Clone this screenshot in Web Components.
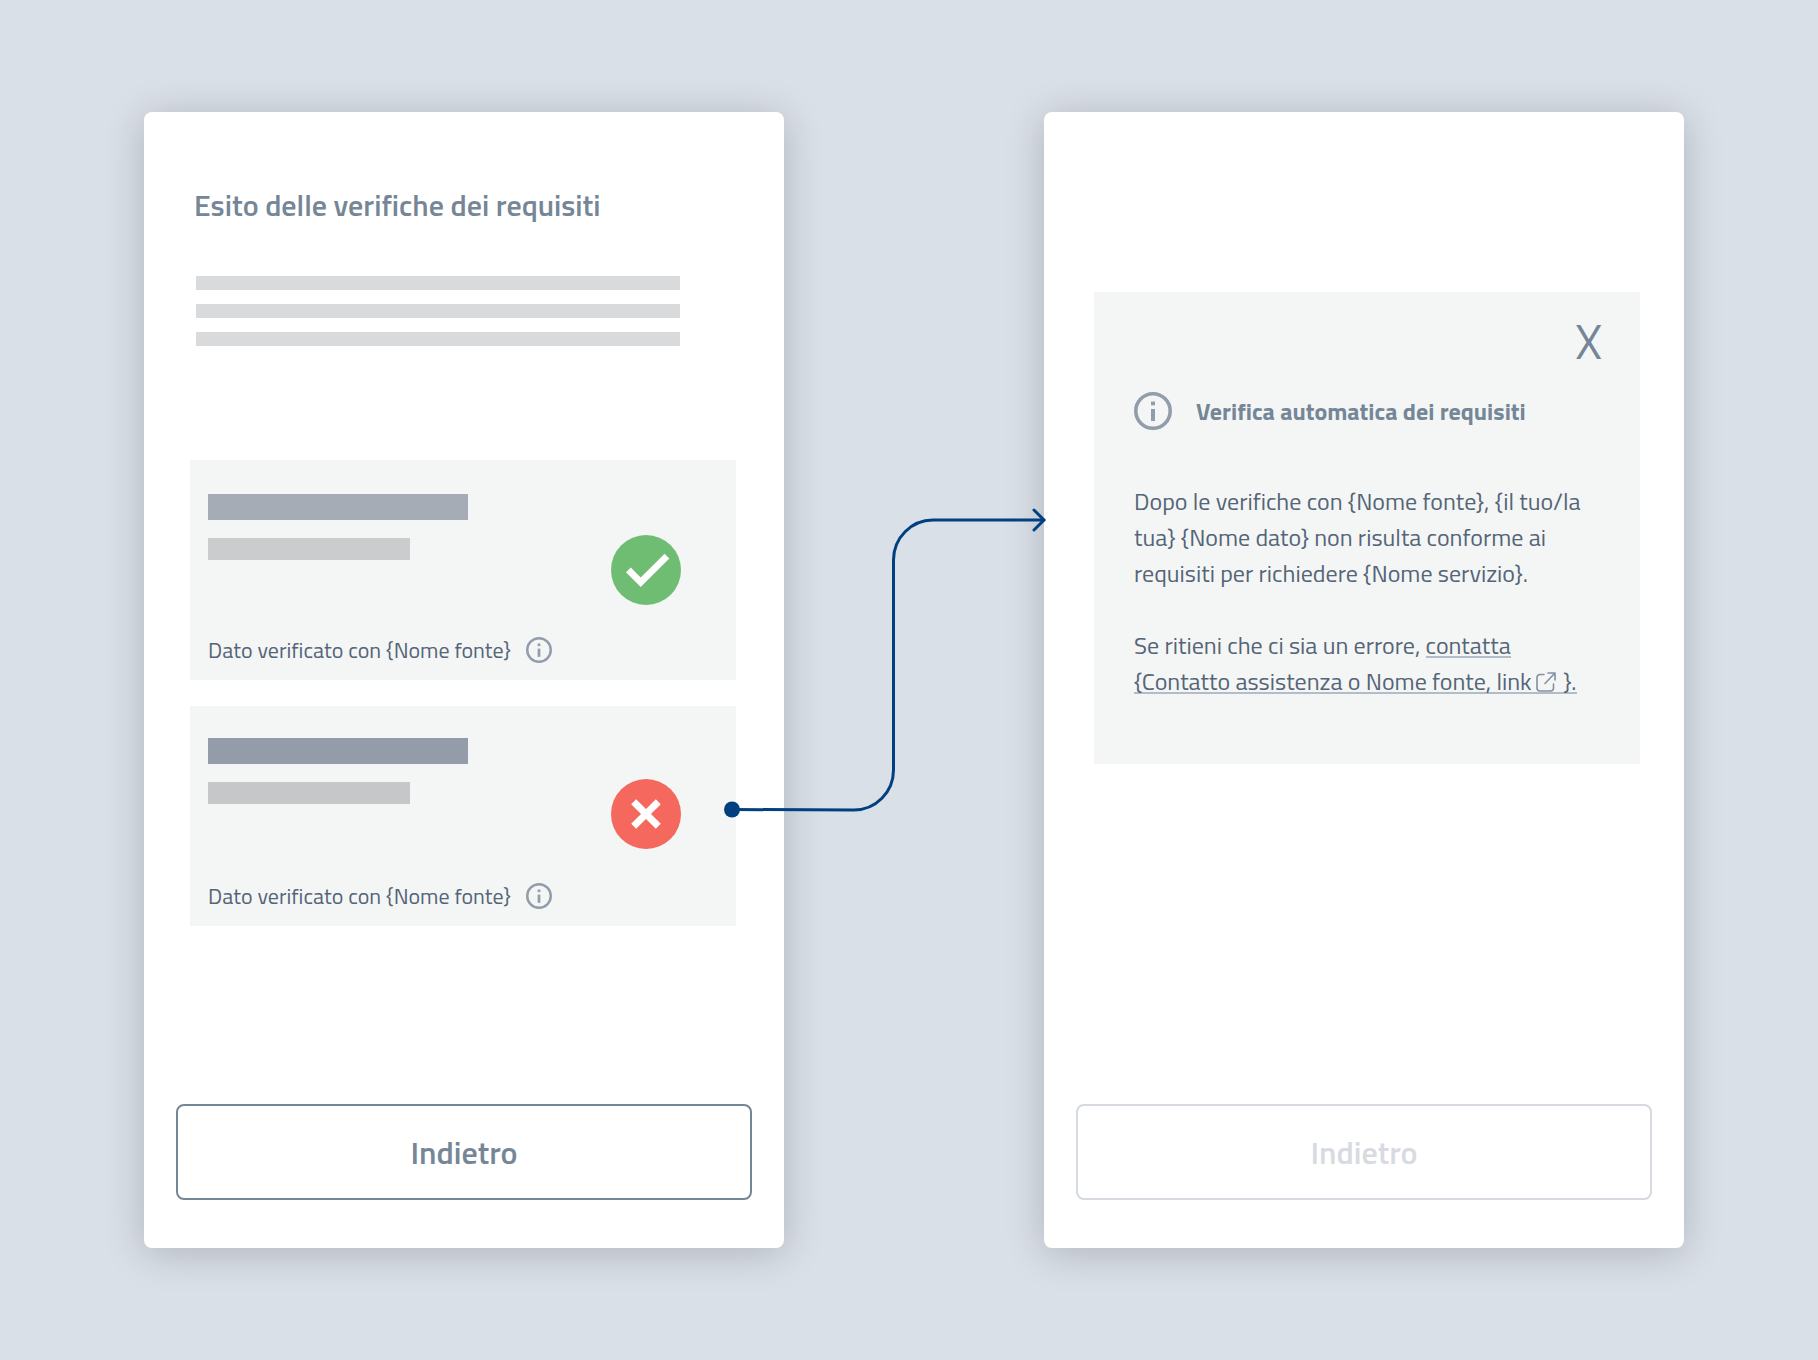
<!DOCTYPE html>
<html lang="it">
<head>
<meta charset="utf-8">
<meta name="viewport" content="width=device-width, initial-scale=1">
<title>Esito delle verifiche dei requisiti</title>
<style>
  body {
    margin: 0;
    background: #dae0e7;
    color: #556577;
    font-family: 'Titillium Web', Lato, sans-serif;
  }
</style>
</head>
<body>

<flow-board>
  <phone-screen>
    <requirements-result heading="Esito delle verifiche dei requisiti">
      <check-card status="ok">Dato verificato con {Nome fonte}</check-card>
      <check-card status="error">Dato verificato con {Nome fonte}</check-card>
    </requirements-result>
    <back-button slot="footer">Indietro</back-button>
  </phone-screen>

  <flow-arrow></flow-arrow>

  <phone-screen>
    <info-modal>
      <span slot="title">Verifica automatica dei requisiti</span>
      <span>Dopo le verifiche con {Nome fonte}, {il tuo/la tua} {Nome dato} non risulta conforme ai requisiti per richiedere {Nome servizio}.</span>
      <span slot="help">Se ritieni che ci sia un errore, <external-link><span>contatta</span> <span>{Contatto assistenza o Nome fonte, link</span><span slot="after">}.</span></external-link></span>
    </info-modal>
    <back-button slot="footer" disabled>Indietro</back-button>
  </phone-screen>
</flow-board>

<script>
function createTemplate(html) {
  const template = document.createElement('template')
  template.innerHTML = html
  return template
}

class BaseElement extends HTMLElement {
  constructor() {
    super()
    this._shadowRoot = this.attachShadow({ mode: 'open' })
    this._shadowRoot.appendChild(this.constructor.template.content.cloneNode(true))
  }
}

class FlowBoard extends BaseElement {
  static template = createTemplate(`<style>
    :host {
      display: flex;
      box-sizing: border-box;
      min-height: 100vh;
      padding: 112px 134px 112px 144px;
    }
  </style>
  <slot></slot>`)
}

class PhoneScreen extends BaseElement {
  static template = createTemplate(`<style>
    :host {
      display: flex;
      flex: 1 1 0;
      flex-direction: column;
      min-width: 0;
      border-radius: 8px;
      background: #fff;
      box-shadow: 0 5px 40px rgba(10, 0, 20, 0.2);
    }

    main {
      flex: 1;
    }

    footer {
      padding: 32px 32px 48px;
    }
  </style>
  <main><slot></slot></main>
  <footer><slot name="footer"></slot></footer>`)
}

class RequirementsResult extends BaseElement {
  static template = createTemplate(`<style>
    :host {
      display: block;
      padding: 75px 48px 0 46px;
    }

    h1 {
      margin: 0 4px;
      color: #758697;
      font-size: 30px;
      font-weight: 600;
      line-height: 36px;
    }

    .lines {
      display: grid;
      gap: 14px;
      margin: 53px 56px 114px 6px;
    }

    .line {
      height: 14px;
      background: #d9dadc;
    }

    .cards {
      display: grid;
      gap: 26px;
    }
  </style>
  <h1></h1>
  <div class="lines">
    <div class="line"></div>
    <div class="line"></div>
    <div class="line"></div>
  </div>
  <div class="cards"><slot></slot></div>`)

  connectedCallback() {
    this._shadowRoot.querySelector('h1').textContent = this.getAttribute('heading')
  }
}

class InfoIcon extends BaseElement {
  static template = createTemplate(`<style>
    :host {
      display: block;
      flex: none;
      width: 26px;
      height: 26px;
      color: #929dac;
    }

    svg {
      display: block;
      width: 100%;
      height: 100%;
    }
  </style>
  <svg viewBox="0 0 38 38" fill="currentColor" aria-hidden="true">
    <circle cx="19" cy="19" r="17.2" fill="none" stroke="currentColor" stroke-width="3.6"/>
    <rect x="17" y="9.5" width="4" height="3.8"/>
    <rect x="17" y="17" width="4" height="12"/>
  </svg>`)
}

const statusIcons = {
  ok: `<circle cx="35" cy="35" r="35" fill="#6fbd72"/>
    <path d="M15 37.3 19.8 32.6 29.7 42.4 53.6 18.7 58.3 23.4 29.7 52Z" fill="#fff"/>`,
  error: `<circle cx="35" cy="35" r="35" fill="#f4685e"/>
    <path d="M22.7 22.7 47.3 47.3M47.3 22.7 22.7 47.3" stroke="#fff" stroke-width="7"/>`
}

class CheckCard extends BaseElement {
  static template = createTemplate(`<style>
    :host {
      display: flex;
      flex-direction: column;
      justify-content: space-between;
      box-sizing: border-box;
      min-height: 220px;
      padding: 34px 55px 12px 18px;
      background: #f4f6f6;
      --title-bar: #a5acb6;
      --text-bar: #cbcccd;
    }

    :host([status="error"]) {
      padding-top: 32px;
      --title-bar: #939ca8;
      --text-bar: #c6c7c9;
    }

    .summary {
      display: flex;
      justify-content: space-between;
    }

    .bars {
      display: grid;
      flex: 0 1 260px;
      gap: 18px;
      align-content: start;
    }

    .title-bar {
      height: 26px;
      background: var(--title-bar);
    }

    .text-bar {
      max-width: 202px;
      height: 22px;
      background: var(--text-bar);
    }

    .status {
      flex: none;
      width: 70px;
      height: 70px;
      margin-top: 41px;
    }

    .source {
      display: flex;
      gap: 15px;
      align-items: center;
      font-size: 22px;
      line-height: 36px;
    }

    button {
      padding: 0;
      border: 0;
      background: none;
      cursor: pointer;
    }
  </style>
  <div class="summary">
    <div class="bars">
      <div class="title-bar"></div>
      <div class="text-bar"></div>
    </div>
    <svg class="status" viewBox="0 0 70 70"></svg>
  </div>
  <div class="source">
    <span><slot></slot></span>
    <button type="button" aria-label="Informazioni"><info-icon></info-icon></button>
  </div>`)

  connectedCallback() {
    this._shadowRoot.querySelector('.status').innerHTML = statusIcons[this.getAttribute('status')]
  }
}

class BackButton extends BaseElement {
  static template = createTemplate(`<style>
    :host {
      display: block;
    }

    button {
      display: block;
      width: 100%;
      padding: 22px;
      border: 2px solid #758697;
      border-radius: 8px;
      background: #fff;
      color: #758697;
      font: inherit;
      font-size: 32px;
      font-weight: 600;
      line-height: 48px;
      cursor: pointer;
    }

    button:disabled {
      border-color: #d5dae0;
      color: #d7dbe1;
      cursor: default;
    }
  </style>
  <button type="button"><slot></slot></button>`)

  connectedCallback() {
    this._shadowRoot.querySelector('button').disabled = this.hasAttribute('disabled')
  }
}

class InfoModal extends BaseElement {
  static template = createTemplate(`<style>
    :host {
      display: block;
      margin: 180px 44px 0 50px;
      padding: 26px 38px 65px 40px;
      background: #f4f6f6;
      font-size: 24px;
      line-height: 36px;
    }

    .close {
      display: block;
      margin: 0 0 26px auto;
      padding: 0;
      border: 0;
      background: none;
      color: #758697;
      font: inherit;
      font-size: 48px;
      line-height: 48px;
      cursor: pointer;
    }

    header {
      display: flex;
      gap: 24px;
      align-items: center;
      margin-bottom: 53px;
    }

    h2 {
      margin: 0;
      color: #758697;
      font-size: 24px;
      font-weight: 700;
    }

    info-icon {
      width: 38px;
      height: 38px;
    }

    p {
      margin: 0;
    }

    p + p {
      margin-top: 36px;
    }
  </style>
  <button class="close" type="button">X</button>
  <header>
    <info-icon></info-icon>
    <h2><slot name="title"></slot></h2>
  </header>
  <p><slot></slot></p>
  <p><slot name="help"></slot></p>`)
}

class ExternalLink extends BaseElement {
  static template = createTemplate(`<style>
    :host {
      display: inline;
    }

    /* drawn as a background so the line also runs below the icon */
    a {
      background: linear-gradient(#b4bcc8, #b4bcc8) 0 29px / 100% 2px no-repeat;
      color: inherit;
      text-decoration: none;
      -webkit-box-decoration-break: clone;
      box-decoration-break: clone;
    }

    svg {
      width: 20px;
      height: 20px;
      margin: 0 2px 0 4px;
      vertical-align: -2px;
    }
  </style>
  <a href="#"><slot></slot><svg viewBox="0 0 20 20" fill="none" stroke="#8490a0" stroke-width="1.6" stroke-linecap="round" stroke-linejoin="round" aria-hidden="true">
    <path d="M8 2.5H4A3 3 0 0 0 1 5.5V16A3 3 0 0 0 4 19H14.5A3 3 0 0 0 17.5 16V12M12 1H19V8M19 1 9 11.5"/>
  </svg> <slot name="after"></slot></a>`)
}

class FlowArrow extends BaseElement {
  static template = createTemplate(`<style>
    :host {
      position: relative;
      z-index: 1;
      flex: 0 0 260px;
      align-self: flex-start;
      margin-top: 398px;
      pointer-events: none;
    }

    svg {
      display: block;
      width: 260px;
      height: 310px;
      overflow: visible;
    }
  </style>
  <svg viewBox="0 0 260 310" fill="none" stroke="#004080" stroke-width="3" stroke-linecap="round" stroke-linejoin="round" aria-hidden="true">
    <circle cx="-52" cy="299.5" r="8" fill="#004080" stroke="none"/>
    <path d="M-52 299.5 70 300A39.5 40 0 0 0 109.5 260V50A39.5 40 0 0 1 149 10H260"/>
    <path d="M250 0 260 10 250 20"/>
  </svg>`)
}

customElements.define('info-icon', InfoIcon)
customElements.define('flow-board', FlowBoard)
customElements.define('phone-screen', PhoneScreen)
customElements.define('requirements-result', RequirementsResult)
customElements.define('check-card', CheckCard)
customElements.define('back-button', BackButton)
customElements.define('info-modal', InfoModal)
customElements.define('external-link', ExternalLink)
customElements.define('flow-arrow', FlowArrow)
</script>
</body>
</html>
